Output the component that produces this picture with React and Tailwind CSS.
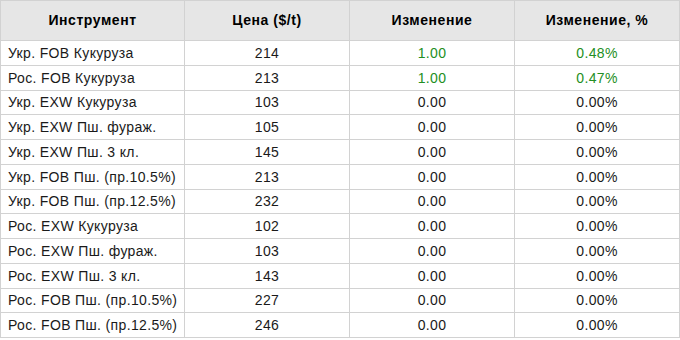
const ROWS = [
  ['Укр. FOB Кукуруза', '214', '1.00', '0.48%'],
  ['Рос. FOB Кукуруза', '213', '1.00', '0.47%'],
  ['Укр. EXW Кукуруза', '103', '0.00', '0.00%'],
  ['Укр. EXW Пш. фураж.', '105', '0.00', '0.00%'],
  ['Укр. EXW Пш. 3 кл.', '145', '0.00', '0.00%'],
  ['Укр. FOB Пш. (пр.10.5%)', '213', '0.00', '0.00%'],
  ['Укр. FOB Пш. (пр.12.5%)', '232', '0.00', '0.00%'],
  ['Рос. EXW Кукуруза', '102', '0.00', '0.00%'],
  ['Рос. EXW Пш. фураж.', '103', '0.00', '0.00%'],
  ['Рос. EXW Пш. 3 кл.', '143', '0.00', '0.00%'],
  ['Рос. FOB Пш. (пр.10.5%)', '227', '0.00', '0.00%'],
  ['Рос. FOB Пш. (пр.12.5%)', '246', '0.00', '0.00%'],
]

export default function App() {
  return (
    <div className="w-[680px] h-[340px] bg-white font-['Liberation_Sans',Arial,sans-serif] text-[14px] tracking-[0.35px] text-[#1a1a1a]">
      <table className="w-[679px] border-collapse table-fixed">
        <colgroup>
          <col className="w-[184px]" />
          <col className="w-[165px]" />
          <col className="w-[165px]" />
          <col className="w-[165px]" />
        </colgroup>
        <thead>
          <tr className="h-[40px] bg-[#e6e6e6] text-black tracking-[0.55px]">
            <th className="border border-[#d2d2d2] font-bold text-center">Инструмент</th>
            <th className="border border-[#d2d2d2] font-bold text-center">Цена ($/t)</th>
            <th className="border border-[#d2d2d2] font-bold text-center">Изменение</th>
            <th className="border border-[#d2d2d2] font-bold text-center">Изменение, %</th>
          </tr>
        </thead>
        <tbody>
          {ROWS.map(([name, price, chg, pct]) => {
            const up = chg !== '0.00'
            return (
              <tr key={name} className="h-[24.75px]">
                <td className="border border-[#d2d2d2] pl-[7px] p-0 pt-px whitespace-nowrap">{name}</td>
                <td className="border border-[#d2d2d2] p-0 pt-px text-center">{price}</td>
                <td className={`border border-[#d2d2d2] p-0 pt-px text-center ${up ? 'text-[#238f23]' : ''}`}>{chg}</td>
                <td className={`border border-[#d2d2d2] p-0 pt-px text-center ${up ? 'text-[#238f23]' : ''}`}>{pct}</td>
              </tr>
            )
          })}
        </tbody>
      </table>
    </div>
  )
}
